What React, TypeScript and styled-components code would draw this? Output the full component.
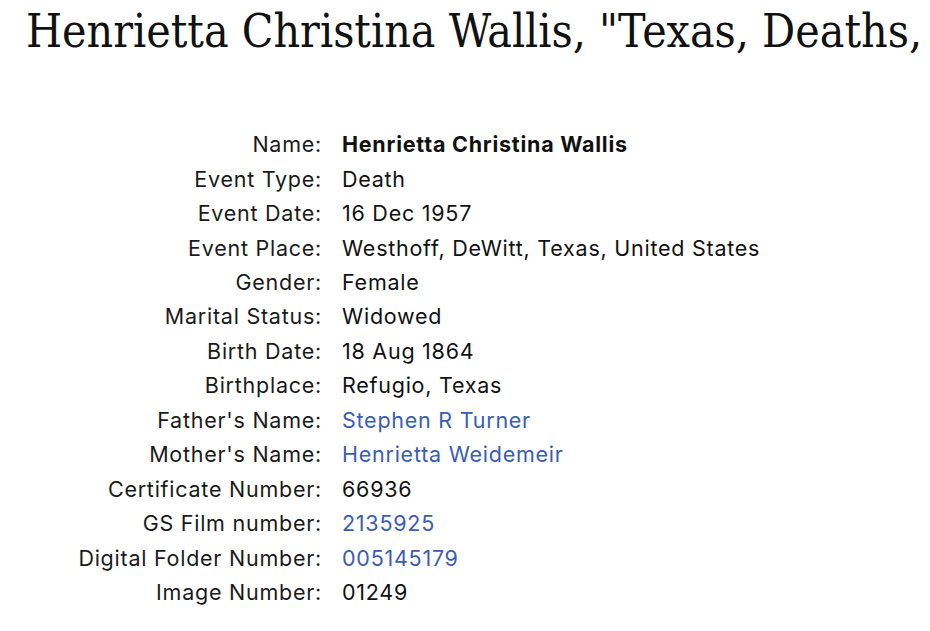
import React from 'react'
import styled, { createGlobalStyle } from 'styled-components'

type Fact = {
  label: string
  value: string
  link?: boolean
  strong?: boolean
}

const facts: Fact[] = [
  { label: 'Name', value: 'Henrietta Christina Wallis', strong: true },
  { label: 'Event Type', value: 'Death' },
  { label: 'Event Date', value: '16 Dec 1957' },
  { label: 'Event Place', value: 'Westhoff, DeWitt, Texas, United States' },
  { label: 'Gender', value: 'Female' },
  { label: 'Marital Status', value: 'Widowed' },
  { label: 'Birth Date', value: '18 Aug 1864' },
  { label: 'Birthplace', value: 'Refugio, Texas' },
  { label: "Father's Name", value: 'Stephen R Turner', link: true },
  { label: "Mother's Name", value: 'Henrietta Weidemeir', link: true },
  { label: 'Certificate Number', value: '66936' },
  { label: 'GS Film number', value: '2135925', link: true },
  { label: 'Digital Folder Number', value: '005145179', link: true },
  { label: 'Image Number', value: '01249' },
]

export default function App() {
  return (
    <Page>
      <GlobalStyle />
      <Title>Henrietta Christina Wallis, "Texas, Deaths,</Title>
      <FactTable>
        {facts.map((f) => (
          <React.Fragment key={f.label}>
            <Label>{f.label}:</Label>
            <Value $link={f.link} $strong={f.strong}>{f.value}</Value>
          </React.Fragment>
        ))}
      </FactTable>
    </Page>
  )
}

const GlobalStyle = createGlobalStyle`
  html, body {
    margin: 0;
    padding: 0;
    background: #ffffff;
  }
`

const Page = styled.div`
  width: 930px;
  height: 631px;
  overflow: hidden;
  background: #ffffff;
  font-family: Inter, "Open Sans", sans-serif;
`

const Title = styled.h1`
  margin: 0;
  padding: 0 0 0 26px;
  font-family: "DejaVu Serif", serif;
  font-stretch: condensed;
  font-weight: 400;
  font-size: 46px;
  line-height: 62px;
  color: #111111;
  white-space: nowrap;
`

const FactTable = styled.div`
  display: grid;
  grid-template-columns: 322px 1fr;
  column-gap: 20px;
  grid-auto-rows: 34.46px;
  margin-top: 65px;
  align-items: center;
`

const Label = styled.div`
  text-align: right;
  font-size: 21.5px;
  letter-spacing: 0.75px;
  color: #1a1a1a;
  white-space: nowrap;
`

const Value = styled.div<{ $link?: boolean; $strong?: boolean }>`
  font-size: 21.5px;
  letter-spacing: 0.75px;
  white-space: nowrap;
  color: ${(p) => (p.$link ? '#3a5db5' : '#111111')};
  font-weight: ${(p) => (p.$strong ? 700 : 400)};
`
